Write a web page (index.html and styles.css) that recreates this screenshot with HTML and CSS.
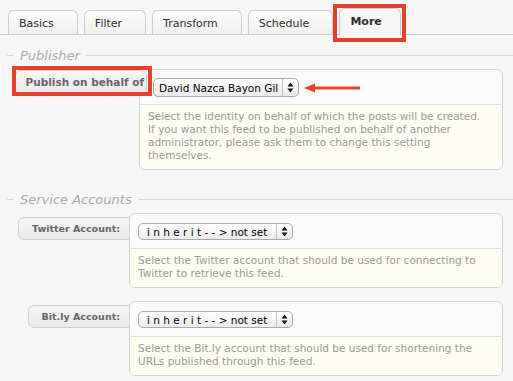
FILE: index.html
```html
<!DOCTYPE html>
<html lang="en">
<head>
  <meta charset="UTF-8" />
  <meta name="viewport" content="width=device-width, initial-scale=1.0"/>
  <title>Feed Settings - More</title>
  <link rel="stylesheet" href="styles.css">
</head>
<body>

  <div class="tabs">
    <div class="tab">Basics</div>
    <div class="tab">Filter</div>
    <div class="tab">Transform</div>
    <div class="tab">Schedule</div>
    <div class="tab active mark mark-tab">More</div>
  </div>

  <div class="legend legend-first">Publisher</div>
  <div class="row row-publisher">
    <div class="label-col">
      <span class="label label-front mark mark-label">Publish on behalf of</span>
    </div>
    <div class="field">
      <div class="field-top">
        <div class="select">
          <span class="select-text">David Nazca Bayon Gil</span>
          <span class="select-arrows">
            <svg width="7" height="11" viewBox="0 0 7 11"><polygon points="0.5,4.5 3.5,0.5 6.5,4.5" fill="#111"/><polygon points="0.5,6.5 3.5,10.5 6.5,6.5" fill="#111"/></svg>
          </span>
        </div>
        <svg class="pointer" width="56" height="10" viewBox="0 0 56 10">
          <polygon points="0,5 11,0.5 11,9.5" fill="#e5402a"/>
          <rect x="10" y="3.5" width="46" height="3" fill="#e5402a"/>
        </svg>
      </div>
      <div class="desc">Select the identity on behalf of which the posts will be created.<br>If you want this feed to be published on behalf of another administrator, please ask them to change this setting themselves.</div>
    </div>
  </div>

  <div class="legend">Service Accounts</div>
  <div class="row">
    <div class="label-col">
      <span class="label">Twitter Account:</span>
    </div>
    <div class="field">
      <div class="field-top">
        <div class="select select-small">
          <span class="select-text">i n h e r i t - - &gt; not set</span>
          <span class="select-arrows">
            <svg width="7" height="11" viewBox="0 0 7 11"><polygon points="0.5,4.5 3.5,0.5 6.5,4.5" fill="#111"/><polygon points="0.5,6.5 3.5,10.5 6.5,6.5" fill="#111"/></svg>
          </span>
        </div>
      </div>
      <div class="desc">Select the Twitter account that should be used for connecting to Twitter to retrieve this feed.</div>
    </div>
  </div>

  <div class="row">
    <div class="label-col">
      <span class="label">Bit.ly Account:</span>
    </div>
    <div class="field">
      <div class="field-top">
        <div class="select select-small">
          <span class="select-text">i n h e r i t - - &gt; not set</span>
          <span class="select-arrows">
            <svg width="7" height="11" viewBox="0 0 7 11"><polygon points="0.5,4.5 3.5,0.5 6.5,4.5" fill="#111"/><polygon points="0.5,6.5 3.5,10.5 6.5,6.5" fill="#111"/></svg>
          </span>
        </div>
      </div>
      <div class="desc">Select the Bit.ly account that should be used for shortening the URLs published through this feed.</div>
    </div>
  </div>

</body>
</html>
```

FILE: styles.css
```css
body {
  margin: 0;
  background: #f6f6f6;
  font-family: "DejaVu Sans", "Lucida Grande", sans-serif;
}
.tabs {
  display: flex;
  align-items: flex-end;
  gap: 6px;
  height: 34px;
  padding-left: 8px;
  border-bottom: 1px solid #c9cfd8;
}
.tab {
  box-sizing: border-box;
  height: 24px;
  padding: 6px 23px 0 10px;
  border: 1px solid #c6cdd8;
  border-bottom: none;
  border-radius: 6px 6px 0 0;
  background: linear-gradient(#fdfdfd, #efefef);
  color: #2e2e2e;
  font-size: 11px;
  line-height: 14px;
}
.tab.active {
  height: 27px;
  margin-bottom: -1px;
  padding-right: 18px;
  background: #f6f6f6;
  font-weight: bold;
}
.mark {
  position: relative;
}
.mark::after {
  content: "";
  position: absolute;
  border: 4px solid #e5402a;
}
.mark-tab::after {
  left: -7px;
  right: -6px;
  top: -5px;
  bottom: -7px;
}
.mark-label::after {
  left: -4px;
  right: -6px;
  top: -5px;
  bottom: -2px;
}
.legend {
  display: flex;
  align-items: center;
  gap: 6px;
  height: 16px;
  margin: 21px 0 6px;
  padding-left: 7px;
  color: #aaa;
  font-size: 13px;
  font-style: italic;
}
.legend-first {
  margin-top: 12px;
}
.legend::before {
  content: "";
  width: 7px;
  border-top: 1px solid #d6d6d6;
}
.legend::after {
  content: "";
  flex: 1;
  border-top: 1px solid #d6d6d6;
}
.row {
  display: flex;
  align-items: flex-start;
  padding-right: 10px;
  margin-bottom: 13px;
}
.label-col {
  display: flex;
  justify-content: flex-end;
  flex-shrink: 0;
  width: 129px;
}
.row-publisher .label-col {
  width: 139px;
}
.label {
  box-sizing: border-box;
  height: 23px;
  margin-top: 4px;
  margin-right: -10px;
  padding: 0 18px 0 13px;
  border: 1px solid #cfcfcf;
  border-radius: 6px;
  background: linear-gradient(#f6f6f6, #e9e9e9);
  color: #666;
  font-size: 9.5px;
  font-weight: bold;
  line-height: 21px;
  white-space: nowrap;
}
.label-front {
  z-index: 1;
  height: 25px;
  margin-top: 1px;
  margin-right: -8px;
  padding: 0 2px 0 10px;
  font-size: 10.5px;
  line-height: 23px;
}
.field {
  flex: 1;
  border: 1px solid #d3d3d3;
  border-radius: 6px;
  background: #fafafa;
  overflow: hidden;
}
.field-top {
  display: flex;
  align-items: center;
  padding: 9px 8px 8px;
}
.row-publisher .field-top {
  padding: 8px 13px 7px;
}
.select {
  box-sizing: border-box;
  display: flex;
  width: 146px;
  height: 19px;
  border: 1px solid #a9a9a9;
  border-radius: 5px;
  background: linear-gradient(#ffffff, #ebebeb);
  color: #000;
  font-size: 10.5px;
}
.select-small {
  width: 155px;
  height: 17px;
}
.select-text {
  flex: 1;
  display: flex;
  align-items: center;
  padding-left: 5px;
  white-space: nowrap;
}
.select-small .select-text {
  padding-left: 8px;
}
.select-arrows {
  display: flex;
  align-items: center;
  justify-content: center;
  width: 15px;
  border-left: 1px solid #c2c2c2;
}
.pointer {
  margin-left: 5px;
}
.desc {
  padding: 5px 12px 7px 8px;
  border-top: 1px solid #dedede;
  background: #fdfdf2;
  color: #9a9a9a;
  font-size: 10.5px;
  line-height: 13px;
}
```
